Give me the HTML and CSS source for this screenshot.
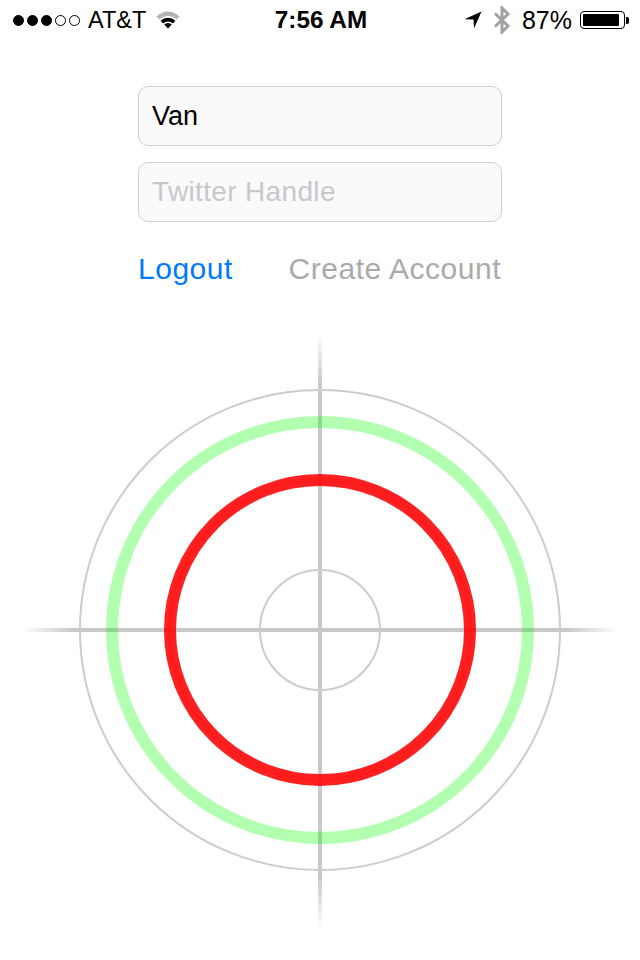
FILE: index.html
```html
<!DOCTYPE html>
<html lang="en">
<head>
    <meta charset="UTF-8">
    <meta name="viewport" content="width=device-width, initial-scale=1.0">
    <title>Account</title>
    <link rel="stylesheet" href="styles.css">
</head>
<body>
<header class="status-bar">
    <div class="status-left">
        <div class="signal">
            <span class="dot on"></span><span class="dot on"></span><span class="dot on"></span><span class="dot"></span><span class="dot"></span>
        </div>
        <span class="carrier">AT&amp;T</span>
        <svg class="wifi" width="24" height="20" viewBox="0 0 24 20">
            <path d="M0.5 6.5 A16 16 0 0 1 23.5 6.5 L20.6 9.6 A12 12 0 0 0 3.4 9.6 Z" fill="#b5b5b5"/>
            <path d="M4.6 10.8 A10.5 10.5 0 0 1 19.4 10.8 L16.9 13.4 A7 7 0 0 0 7.1 13.4 Z" fill="#000"/>
            <path d="M8.2 14.6 A5.4 5.4 0 0 1 15.8 14.6 L12 18.6 Z" fill="#000"/>
        </svg>
    </div>
    <div class="time">7:56 AM</div>
    <div class="status-right">
        <svg class="arrow" width="18" height="18" viewBox="0 0 18 18">
            <path d="M17.5 0.5 L0.5 8.2 L9.5 8.6 L10 17.5 Z" fill="#000"/>
        </svg>
        <svg class="bluetooth" width="16" height="28" viewBox="0 0 16 28">
            <path d="M1 7.5 L14 20 L8 26 L8 2 L14 8 L1 20.5" fill="none" stroke="#a0a0a0" stroke-width="3"/>
        </svg>
        <span class="percent">87%</span>
        <div class="battery"><div class="battery-fill"></div></div>
        <div class="battery-tip"></div>
    </div>
</header>

<main>
    <form class="account-form">
        <input class="field" type="text" value="Van">
        <input class="field" type="text" placeholder="Twitter Handle">
        <div class="actions">
            <a class="action-logout" href="#logout">Logout</a>
            <a class="action-create" href="#create">Create Account</a>
        </div>
    </form>

    <svg class="target" width="600" height="600" viewBox="0 0 600 600">
        <defs>
            <linearGradient id="fade-v" x1="0" y1="0" x2="0" y2="1">
                <stop offset="0.005" stop-color="#c8c8c8" stop-opacity="0"/>
                <stop offset="0.09" stop-color="#c8c8c8"/>
                <stop offset="0.91" stop-color="#c8c8c8"/>
                <stop offset="0.995" stop-color="#c8c8c8" stop-opacity="0"/>
            </linearGradient>
            <linearGradient id="fade-h" x1="0" y1="0" x2="1" y2="0">
                <stop offset="0.005" stop-color="#c8c8c8" stop-opacity="0"/>
                <stop offset="0.09" stop-color="#c8c8c8"/>
                <stop offset="0.91" stop-color="#c8c8c8"/>
                <stop offset="0.995" stop-color="#c8c8c8" stop-opacity="0"/>
            </linearGradient>
        </defs>
        <rect x="298" y="0" width="4" height="600" fill="url(#fade-v)"/>
        <rect x="0" y="298" width="600" height="4" fill="url(#fade-h)"/>
        <circle class="ring-thin" cx="300" cy="300" r="240"/>
        <circle class="ring-thin" cx="300" cy="300" r="60"/>
        <circle class="ring-green" cx="300" cy="300" r="208"/>
        <circle class="ring-red" cx="300" cy="300" r="150"/>
        <circle class="ring-red-core" cx="300" cy="300" r="150"/>
    </svg>
</main>
</body>
</html>
```

FILE: styles.css
```css
body {
    font-family: 'Liberation Sans', Arial, sans-serif;
    margin: 0;
    padding: 0;
    background-color: #fff;
    color: #000;
}

.status-bar {
    height: 40px;
    display: grid;
    grid-template-columns: 1fr auto 1fr;
    align-items: center;
    padding: 0 11px 0 13px;
    font-size: 25px;
}

.status-left, .status-right {
    display: flex;
    align-items: center;
}

.status-right {
    justify-content: flex-end;
}

.signal {
    display: flex;
    gap: 3px;
}

.dot {
    width: 9px;
    height: 9px;
    border: 1px solid #000;
    border-radius: 50%;
}

.dot.on {
    background-color: #000;
}

.carrier {
    margin-left: 8px;
    font-size: 23.5px;
}

.wifi {
    margin-left: 10px;
}

.time {
    font-weight: bold;
    font-size: 24.3px;
}

.bluetooth {
    margin-left: 12px;
}

.percent {
    margin-left: 12px;
}

.battery {
    width: 45px;
    height: 18px;
    margin-left: 8px;
    padding: 2px;
    box-sizing: border-box;
    border: 1px solid #000;
    border-radius: 4px;
}

.battery-fill {
    width: 36px;
    height: 100%;
    background-color: #000;
    border-radius: 1px;
}

.battery-tip {
    width: 3px;
    height: 7px;
    margin-left: 1px;
    background-color: #000;
    border-radius: 0 2px 2px 0;
}

main {
    display: flex;
    flex-direction: column;
    align-items: center;
}

.account-form {
    width: 364px;
    margin-top: 46px;
    display: flex;
    flex-direction: column;
    gap: 16px;
}

.field {
    height: 60px;
    box-sizing: border-box;
    margin: 0;
    padding: 0 13px;
    font-family: inherit;
    font-size: 27px;
    color: #000;
    background-color: #fafafa;
    border: 1px solid #cfcfcf;
    border-radius: 10px;
    outline: none;
}

.field::placeholder {
    color: #c7c7cd;
    opacity: 1;
    font-size: 28px;
    letter-spacing: 0.35px;
}

.actions {
    display: flex;
    justify-content: space-between;
    margin-top: 13px;
    font-size: 30px;
    line-height: 36px;
    letter-spacing: 0.52px;
}

.actions a {
    text-decoration: none;
}

.action-logout {
    color: #007aff;
}

.action-create {
    color: #aaa;
    margin-right: 1px;
}

.target {
    margin-top: 43px;
}

.target circle {
    fill: none;
}

.ring-thin {
    stroke: #ccc;
    stroke-width: 2;
}

.ring-green {
    stroke: rgba(0, 255, 0, 0.3);
    stroke-width: 12;
}

.ring-red {
    stroke: rgba(255, 0, 0, 0.87);
    stroke-width: 12;
}

.ring-red-core {
    stroke: rgba(255, 0, 0, 0.15);
    stroke-width: 5;
}
```
